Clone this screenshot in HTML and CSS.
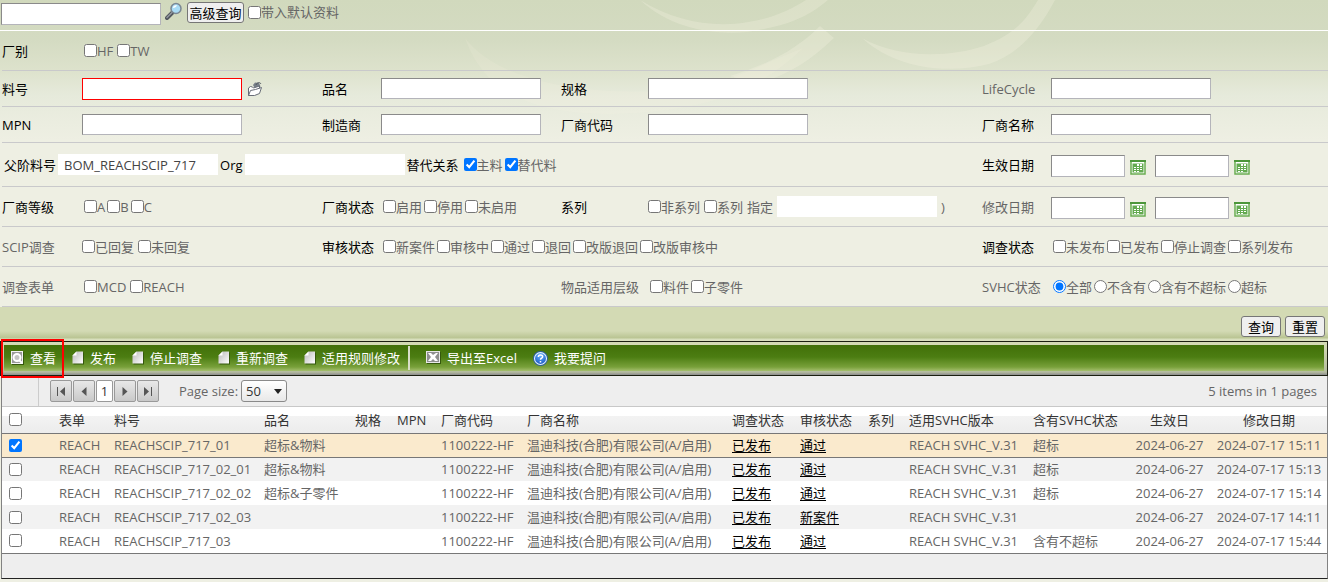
FILE: index.html
```html
<!DOCTYPE html>
<html lang="zh-CN">
<head>
<meta charset="utf-8">
<title>REACH / SCIP 查询</title>
<link rel="stylesheet" href="styles.css">
</head>
<body>
<svg class="icon-defs" aria-hidden="true">
  <defs>
    <linearGradient id="page-fill" x1="0" y1="0" x2="1" y2="1"><stop offset="0" stop-color="#b9b9b9"/><stop offset="1" stop-color="#fff"/></linearGradient>
    <radialGradient id="help-fill" cx=".5" cy=".25" r=".8"><stop offset="0" stop-color="#6ab4ff"/><stop offset="1" stop-color="#1250c0"/></radialGradient>
    <symbol id="i-page" viewBox="0 0 12 14"><path d="M5 1h6.500v12H1V5z" fill="#35580d" transform="translate(.5 .5)"/><path d="M4.500 .5H11v12H.5v-8z" fill="url(#page-fill)"/><path d="M4.500 .5v4h-4z" fill="#fff"/></symbol>
    <symbol id="i-calendar" viewBox="0 0 16 15"><path d="M1 1h14v13H1z" fill="#fff" stroke="#6aad52" stroke-width="1.500"/><path d="M0 0h16v2H0z" fill="#4c963a"/><path d="M2.500 3.500h11v9h-11z" fill="#63aa50"/><path d="M7 4h2v2H7zM10 4h2v2h-2zM4 7h2v1H4zM7 7h2v1H7zM10 7h2v1h-2zM4 9h2v1H4zM7 9h2v1H7zM10 9h2v1h-2zM4 11h2v1H4zM7 11h2v1H7z" fill="#fff"/></symbol>
  </defs>
</svg>
<svg class="swirl" width="1328" height="150" viewBox="0 0 1328 150" aria-hidden="true">
  <path d="M640 0c35 22 75 28 108 22 25-4 42-12 58-22h22c-26 22-50 27-81 32-35 3-75-3-107-32z"/>
  <path d="M862 38c35 20 85 20 122 8 31-12 42-26 54-46h17c-18 34-38 54-66 64-38 10-92 6-127-26z"/>
  <path d="M730 76c40-12 68-28 90-50l14 12c-25 24-48 38-78 46z"/>
  <path d="M465 38c22 28 60 42 110 50 90 10 145-2 194-26l34-14c-45 44-98 64-193 66-95 0-130-34-145-76z" class="faint"/>
</svg>

<form class="page">
  <div class="quick">
    <input class="box quick-box" type="text" aria-label="快速查询">
    <svg class="glass" width="18" height="18" viewBox="0 0 18 18" aria-hidden="true"><path d="M2 16l6-6" stroke="#50555c" stroke-width="4" stroke-linecap="round"/><path d="M2 15.500l5-5" stroke="#9298a0" stroke-width="1.500" stroke-linecap="round"/><circle cx="11" cy="6.500" r="5" fill="#a9dcf6" stroke="#7b8793" stroke-width="1.500"/><path d="M8 6c0-2 2-3 4-2.500-1 1.500-2 2.500-4 2.500z" fill="#fff"/></svg>
    <button class="btn btn-wide" type="button">高级查询</button>
    <label class="opt"><input type="checkbox">带入默认资料</label>
  </div>

  <div class="filters">
    <div class="row">
      <span class="name">厂别</span>
      <div class="opts loose inset"><label class="opt"><input type="checkbox">HF</label><label class="opt"><input type="checkbox">TW</label></div>
    </div>
    <div class="row short">
      <label class="name" for="part">料号</label>
      <div class="field"><input class="box required" id="part" type="text"><svg width="16" height="16" viewBox="0 0 16 16" aria-hidden="true"><path d="M6 4l2-2.500 4 .5 1.500 3.500-5 3z" fill="#777f88"/><path d="M9 4c1-3 4-3 5-1" fill="none" stroke="#50565e"/><path d="M1.500 14.500V7l2-1.500 2 .5 1 1 6-2v4z" fill="#fff" stroke="#686d78"/><path d="M1.500 14.500l2-5 5-1 6-2-2 6-5 2z" fill="#fff" stroke="#686d78"/></svg></div>
      <label class="name" for="pname">品名</label>
      <div class="field"><input class="box" id="pname" type="text"></div>
      <label class="name" for="spec">规格</label>
      <div class="field"><input class="box" id="spec" type="text"></div>
      <label class="name muted" for="life">LifeCycle</label>
      <div class="field"><input class="box" id="life" type="text"></div>
    </div>
    <div class="row short">
      <label class="name" for="mpn">MPN</label>
      <div class="field"><input class="box" id="mpn" type="text"></div>
      <label class="name" for="maker">制造商</label>
      <div class="field"><input class="box" id="maker" type="text"></div>
      <label class="name" for="vcode">厂商代码</label>
      <div class="field"><input class="box" id="vcode" type="text"></div>
      <label class="name" for="vname">厂商名称</label>
      <div class="field"><input class="box" id="vname" type="text"></div>
    </div>
    <div class="row tall">
      <div class="field wide">
        <label class="name" for="parent">父阶料号</label><input class="box plain" id="parent" type="text" value="BOM_REACHSCIP_717">
        <label class="name" for="org">Org</label><input class="box plain" id="org" type="text">
        <span class="name">替代关系</span>
        <div class="opts"><label class="opt"><input type="checkbox" checked>主料</label><label class="opt"><input type="checkbox" checked>替代料</label></div>
      </div>
      <span class="name c7">生效日期</span>
      <div class="field dates">
        <span class="date"><input class="box" type="text" aria-label="生效日期起"><svg width="16" height="15"><use href="#i-calendar"/></svg></span>
        <span class="date"><input class="box" type="text" aria-label="生效日期止"><svg width="16" height="15"><use href="#i-calendar"/></svg></span>
      </div>
    </div>
    <div class="row">
      <span class="name">厂商等级</span>
      <div class="opts inset"><label class="opt"><input type="checkbox">A</label><label class="opt"><input type="checkbox">B</label><label class="opt"><input type="checkbox">C</label></div>
      <span class="name">厂商状态</span>
      <div class="opts inset"><label class="opt"><input type="checkbox">启用</label><label class="opt"><input type="checkbox">停用</label><label class="opt"><input type="checkbox">未启用</label></div>
      <span class="name">系列</span>
      <div class="opts loose"><label class="opt"><input type="checkbox">非系列</label><label class="opt"><input type="checkbox">系列</label><label for="series">指定</label><input class="box plain" id="series" type="text"><span>)</span></div>
      <span class="name muted">修改日期</span>
      <div class="field dates">
        <span class="date"><input class="box" type="text" aria-label="修改日期起"><svg width="16" height="15"><use href="#i-calendar"/></svg></span>
        <span class="date"><input class="box" type="text" aria-label="修改日期止"><svg width="16" height="15"><use href="#i-calendar"/></svg></span>
      </div>
    </div>
    <div class="row">
      <span class="name muted">SCIP调查</span>
      <div class="opts loose"><label class="opt"><input type="checkbox">已回复</label><label class="opt"><input type="checkbox">未回复</label></div>
      <span class="name">审核状态</span>
      <div class="opts inset c4-6"><label class="opt"><input type="checkbox">新案件</label><label class="opt"><input type="checkbox">审核中</label><label class="opt"><input type="checkbox">通过</label><label class="opt"><input type="checkbox">退回</label><label class="opt"><input type="checkbox">改版退回</label><label class="opt"><input type="checkbox">改版审核中</label></div>
      <span class="name c7">调查状态</span>
      <div class="opts inset"><label class="opt"><input type="checkbox">未发布</label><label class="opt"><input type="checkbox">已发布</label><label class="opt"><input type="checkbox">停止调查</label><label class="opt"><input type="checkbox">系列发布</label></div>
    </div>
    <div class="row">
      <span class="name muted">调查表单</span>
      <div class="opts loose inset"><label class="opt"><input type="checkbox">MCD</label><label class="opt"><input type="checkbox">REACH</label></div>
      <span class="name muted c5">物品适用层级</span>
      <div class="opts inset"><label class="opt"><input type="checkbox">料件</label><label class="opt"><input type="checkbox">子零件</label></div>
      <span class="name muted">SVHC状态</span>
      <div class="opts inset"><label class="opt"><input type="radio" name="svhc" checked>全部</label><label class="opt"><input type="radio" name="svhc">不含有</label><label class="opt"><input type="radio" name="svhc">含有不超标</label><label class="opt"><input type="radio" name="svhc">超标</label></div>
    </div>
  </div>
  <div class="submit">
    <button class="btn" type="button">查询</button>
    <button class="btn" type="reset">重置</button>
  </div>

  <div class="toolbar">
    <div class="tools">
      <button class="tool marked" type="button"><svg width="13" height="14" viewBox="0 0 13 14" aria-hidden="true"><path d="M1 1h12v13H1z" fill="#35580d"/><path d="M0 0h12v13H0z" fill="#f4f4f4"/><path d="M1 1h10v11H1z" fill="#9a9a9a"/><circle cx="6" cy="6.500" r="3.500" fill="#c4c4c4" stroke="#fff" stroke-width="2"/><path d="M8 9l3 3" stroke="#fff" stroke-width="2"/></svg>查看</button>
      <button class="tool" type="button"><svg width="12" height="14"><use href="#i-page"/></svg>发布</button>
      <button class="tool" type="button"><svg width="12" height="14"><use href="#i-page"/></svg>停止调查</button>
      <button class="tool" type="button"><svg width="12" height="14"><use href="#i-page"/></svg>重新调查</button>
      <button class="tool" type="button"><svg width="12" height="14"><use href="#i-page"/></svg>适用规则修改</button>
      <span class="split"></span>
      <button class="tool" type="button"><svg width="15" height="14" viewBox="0 0 15 14" aria-hidden="true"><path d="M1 1h14v12H1z" fill="#35580d"/><path d="M0 0h14v12H0z" fill="#e8e8e8"/><path d="M1 1h12v10H1z" fill="#8f8f8f"/><path d="M2 2h3l2 2 3-2h2L9 6l3 4H9L7 8l-2 2H2l3-4z" fill="#fff"/></svg>导出至Excel</button>
      <button class="tool" type="button"><svg width="15" height="15" viewBox="0 0 14 14" aria-hidden="true"><circle cx="7" cy="7" r="7" fill="#2e619d"/><circle cx="7" cy="7" r="5.600" fill="url(#help-fill)" stroke="#e4f2ff"/><path d="M5 5.500C5 3.300 9 3.200 9 5.300 9 6.700 7 6.700 7 8.200M7 9.400v1.300" fill="none" stroke="#fff" stroke-width="1.400"/></svg>我要提问</button>
    </div>
  </div>

  <div class="grid">
    <div class="pager">
      <span class="gutter"></span>
      <div class="pages">
        <button class="pg" type="button" aria-label="首页"><svg width="8" height="9" viewBox="0 0 8 9"><path d="M0 0h1v9H0zM8 0v9L3 4.500z"/></svg></button>
        <button class="pg" type="button" aria-label="上一页"><svg width="6" height="9" viewBox="0 0 6 9"><path d="M5.500 0v9L.5 4.500z"/></svg></button>
        <button class="pg current" type="button">1</button>
        <button class="pg" type="button" aria-label="下一页"><svg width="6" height="9" viewBox="0 0 6 9"><path d="M.5 0v9l5-4.500z"/></svg></button>
        <button class="pg" type="button" aria-label="末页"><svg width="8" height="9" viewBox="0 0 8 9"><path d="M7 0h1v9H7zM0 0v9l5-4.500z"/></svg></button>
      </div>
      <label for="size">Page size:</label>
      <span class="size"><select id="size"><option>50</option></select><svg width="8" height="5" viewBox="0 0 8 5" aria-hidden="true"><path d="M0 0h8L4 5z"/></svg></span>
      <span class="total">5 items in 1 pages</span>
    </div>
    <table>
      <colgroup><col class="w50"><col class="w55"><col class="w150"><col class="w91"><col class="w42"><col class="w44"><col class="w86"><col class="w205"><col class="w68"><col class="w68"><col class="w41"><col class="w124"><col class="w102"><col class="w83"><col class="w116"></colgroup>
      <thead><tr><th><input type="checkbox" aria-label="全选"></th><th>表单</th><th>料号</th><th>品名</th><th>规格</th><th>MPN</th><th>厂商代码</th><th>厂商名称</th><th>调查状态</th><th>审核状态</th><th>系列</th><th>适用SVHC版本</th><th>含有SVHC状态</th><th class="mid">生效日</th><th class="mid">修改日期</th></tr></thead>
      <tbody>
        <tr class="selected"><td><input type="checkbox" aria-label="选择" checked></td><td>REACH</td><td>REACHSCIP_717_01</td><td>超标&amp;物料</td><td></td><td></td><td>1100222-HF</td><td>温迪科技(合肥)有限公司(A/启用)</td><td><a href="#">已发布</a></td><td><a href="#">通过</a></td><td></td><td>REACH SVHC_V.31</td><td>超标</td><td class="mid">2024-06-27</td><td class="mid">2024-07-17 15:11</td></tr>
        <tr><td><input type="checkbox" aria-label="选择"></td><td>REACH</td><td>REACHSCIP_717_02_01</td><td>超标&amp;物料</td><td></td><td></td><td>1100222-HF</td><td>温迪科技(合肥)有限公司(A/启用)</td><td><a href="#">已发布</a></td><td><a href="#">通过</a></td><td></td><td>REACH SVHC_V.31</td><td>超标</td><td class="mid">2024-06-27</td><td class="mid">2024-07-17 15:13</td></tr>
        <tr><td><input type="checkbox" aria-label="选择"></td><td>REACH</td><td>REACHSCIP_717_02_02</td><td>超标&amp;子零件</td><td></td><td></td><td>1100222-HF</td><td>温迪科技(合肥)有限公司(A/启用)</td><td><a href="#">已发布</a></td><td><a href="#">通过</a></td><td></td><td>REACH SVHC_V.31</td><td>超标</td><td class="mid">2024-06-27</td><td class="mid">2024-07-17 15:14</td></tr>
        <tr><td><input type="checkbox" aria-label="选择"></td><td>REACH</td><td>REACHSCIP_717_02_03</td><td></td><td></td><td></td><td>1100222-HF</td><td>温迪科技(合肥)有限公司(A/启用)</td><td><a href="#">已发布</a></td><td><a href="#">新案件</a></td><td></td><td>REACH SVHC_V.31</td><td></td><td class="mid">2024-06-27</td><td class="mid">2024-07-17 14:11</td></tr>
        <tr><td><input type="checkbox" aria-label="选择"></td><td>REACH</td><td>REACHSCIP_717_03</td><td></td><td></td><td></td><td>1100222-HF</td><td>温迪科技(合肥)有限公司(A/启用)</td><td><a href="#">已发布</a></td><td><a href="#">通过</a></td><td></td><td>REACH SVHC_V.31</td><td>含有不超标</td><td class="mid">2024-06-27</td><td class="mid">2024-07-17 15:44</td></tr>
      </tbody>
    </table>
    <div class="grid-foot"></div>
  </div>
</form>
</body>
</html>
```
FILE: styles.css
```css
*, *::after { box-sizing: border-box; }
body {
  margin: 0;
  color: #666;
  font: 13px/18px "Open Sans", "Noto Sans CJK SC", sans-serif;
  background: #eeefe3 linear-gradient(#d1d9bd, #d4dbc2 40px, #dde2cc 70px, #e6eadb 95px, #eeefe3 140px) no-repeat;
}
button, input, select { font: inherit; margin: 0; }
input[type="checkbox"], input[type="radio"] { flex: none; width: 13px; height: 13px; }
svg { flex: none; display: block; }

.icon-defs { position: absolute; width: 0; height: 0; }
.swirl { position: absolute; left: 0; top: 0; z-index: -1; fill: #fbf8e8; fill-opacity: .25; }
.swirl .faint { fill-opacity: .12; }

.quick {
  display: flex;
  align-items: flex-start;
  height: 31px;
  padding: 2px 1px;
  border-bottom: 1px solid #fff;
}
.quick-box { margin-top: 1px; }
.glass { margin: 0 4px; }
.quick .opt { margin: 1px 0 0 4px; }

.box {
  width: 160px;
  height: 21px;
  padding: 0 6px;
  border: 1px solid;
  border-color: #8a8a8a #b4b4ba #b4b4ba #8a8a8a;
  background: #fff;
  color: #444;
}
.quick-box, .required { height: 22px; }
.required { border-color: #f00; }
.plain { padding: 0 5px; border-color: #fff; }

.btn {
  min-width: 40px;
  height: 21px;
  padding: 0 1px;
  line-height: 18px;
  color: #000;
  background: #efefef;
  border: 1px solid #767676;
  border-radius: 3px;
}
.btn-wide { min-width: 57px; }

.filters { padding: 0 0 0 2px; }
.row {
  display: grid;
  grid-template-columns: 80fr 240fr 59fr 180fr 87fr 334fr 69fr 277fr;
  align-items: center;
  height: 40px;
  border-bottom: 1px solid #c9c9cb;
  white-space: nowrap;
}
.row > * { min-width: 0; }
.row.short { height: 36px; }
.row.tall { height: 44px; }
.name { color: #000; }
.name.muted { color: #666; }
.field, .opts, .opt { display: flex; align-items: center; }
.field { gap: 5px; }
.opts { gap: 2px; }
.opts.loose { gap: 4px; }
.inset { padding-left: 2px; }
.wide { grid-column: 1 / 7; gap: 2px; padding-left: 2px; }
.wide .opts { padding-left: 3px; }
.dates { gap: 9px; padding-top: 2px; }
.date { display: flex; align-items: flex-end; gap: 5px; }
.date .box { width: 74px; height: 22px; }
.date svg { margin-bottom: 2px; }
.c4-6 { grid-column: 4 / 7; }
.c5 { grid-column: 5; }
.c7 { grid-column: 7; }

.submit {
  display: flex;
  justify-content: flex-end;
  gap: 4px;
  height: 34px;
  padding: 9px 3px 0 0;
  background: linear-gradient(#d3dab4 24px, #b9c492 31px, #d8dfbd 32px);
}

.toolbar {
  position: relative;
  height: 35px;
  padding: 3px;
  border: 1px solid #1a1f10;
  background: linear-gradient(#d3dab4 2px, #b5bca0 30px, #8d8d8d 33px);
}
.tools {
  display: flex;
  align-items: center;
  gap: 16px;
  height: 26px;
  padding-left: 7px;
  background: linear-gradient(#417008, #4c7d12 12px, #78a03a 22px, #a5bf6e);
}
.tool {
  display: flex;
  align-items: center;
  gap: 6px;
  padding: 0;
  border: 0;
  background: none;
  color: #fff;
  white-space: nowrap;
}
.marked::after {
  content: "";
  position: absolute;
  left: 0;
  top: -3px;
  width: 63px;
  height: 39px;
  border: 2px solid #f00;
}
.split { width: 2px; height: 24px; margin-left: -8px; background: #d9dec9; }

.grid { margin-left: 1px; border: 1px solid #828282; border-top: 0; border-bottom-color: #222; background: #eee; }
.pager {
  display: flex;
  align-items: center;
  height: 31px;
  padding-right: 10px;
  border-bottom: 1px solid #c8c8c8;
}
.gutter { align-self: stretch; width: 37px; margin-right: 11px; border-right: 1px solid #ccc; }
.pages { display: flex; gap: 1px; margin-right: 20px; }
.pg {
  display: grid;
  place-items: center;
  width: 22px;
  height: 22px;
  padding: 0;
  border: 1px solid #999;
  border-radius: 2px;
  background: linear-gradient(#e8e8e8, #c9c9c9);
  fill: #555;
}
.pg.current { width: 17px; background: #fff; color: #333; }
.size { display: grid; align-items: center; margin-left: 3px; }
.size > * { grid-area: 1 / 1; }
.size select {
  appearance: none;
  width: 46px;
  height: 22px;
  padding: 0 4px;
  border: 1px solid #8a8a8a;
  border-radius: 3px;
  background: linear-gradient(#fff, #e8e8e8);
  color: #333;
}
.size svg { justify-self: end; margin-right: 5px; fill: #222; pointer-events: none; }
.total { margin-left: auto; }

table { width: 100%; table-layout: fixed; border-collapse: collapse; background: #fff; white-space: nowrap; }
.w50 { width: 50px; } .w55 { width: 55px; } .w150 { width: 150px; } .w91 { width: 91px; } .w42 { width: 42px; }
.w44 { width: 44px; } .w86 { width: 86px; } .w205 { width: 205px; } .w68 { width: 68px; } .w41 { width: 41px; }
.w124 { width: 124px; } .w102 { width: 102px; } .w83 { width: 83px; } .w116 { width: 116px; }
th, td { height: 24px; padding: 0 0 0 7px; text-align: left; font-weight: 400; }
th { height: 26px; color: #333; }
thead { background: linear-gradient(#fff 9px, #f3f3f3 9px, #ececec); }
tbody tr:nth-child(even) { background: #f2f2f2; }
tbody tr.selected { background: #faeacd; }
thead tr, tbody tr.selected, tbody tr:last-child { border-bottom: 1px solid #777; }
th.mid, td.mid { padding: 0; text-align: center; }
th input, td input { display: block; }
td a { color: #000; text-underline-offset: 2px; }
.grid-foot { height: 24px; }
```
